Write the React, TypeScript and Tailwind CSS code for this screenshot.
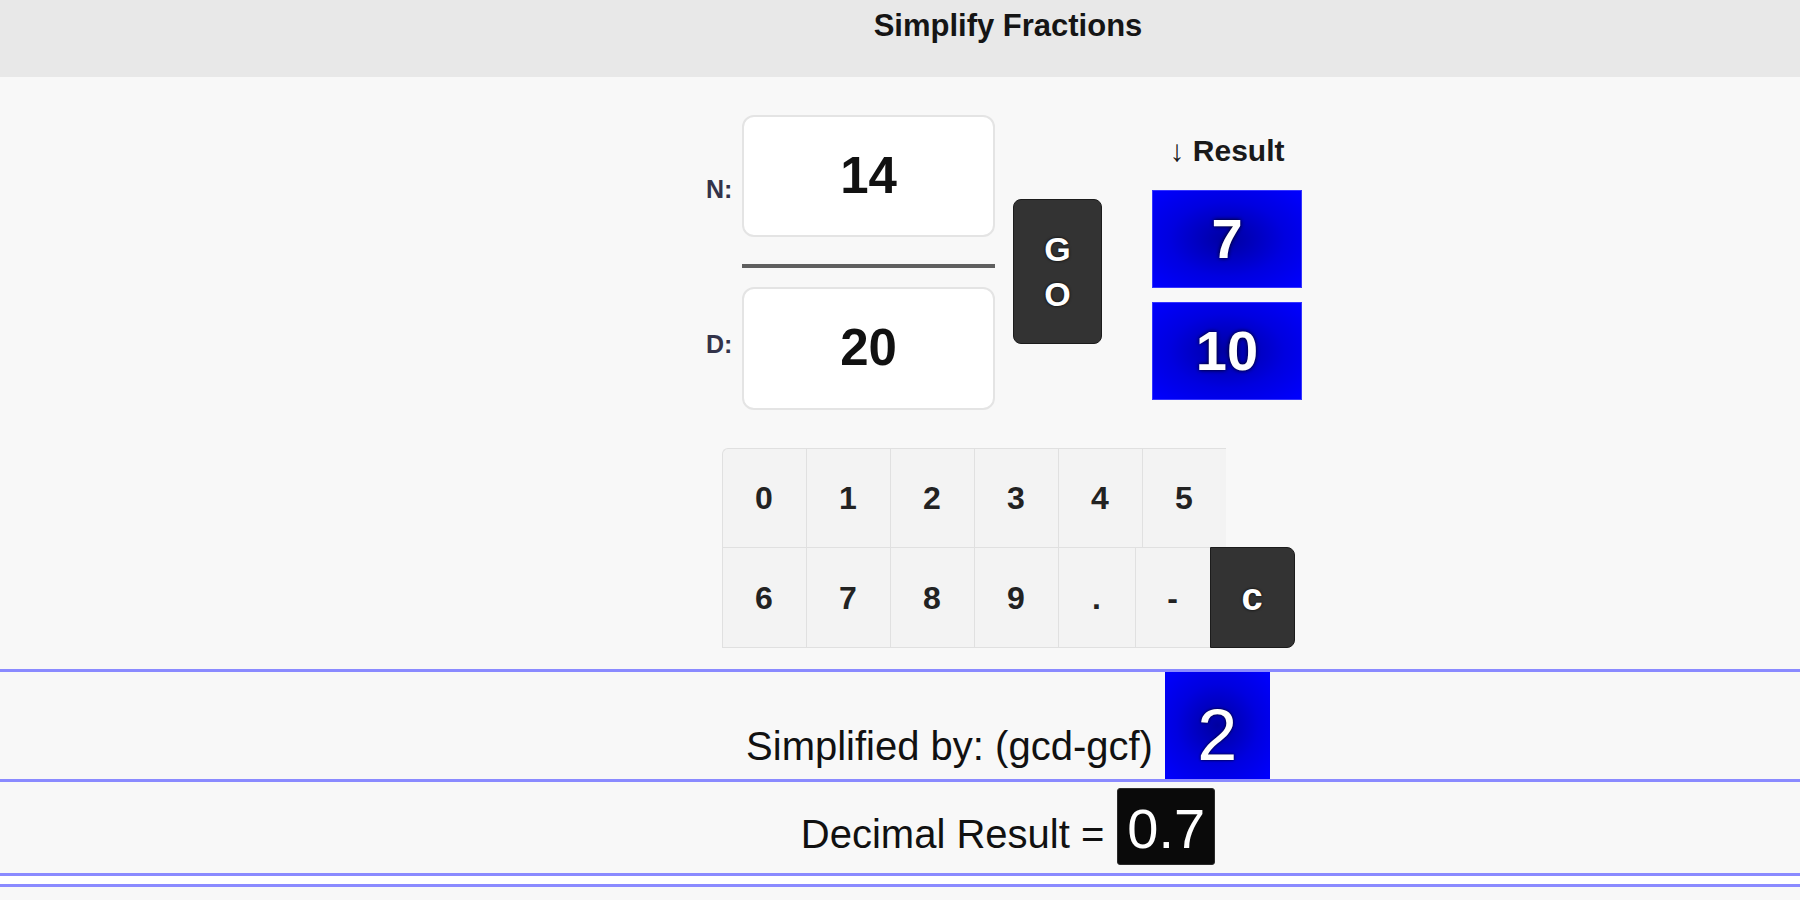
export default function App() {
  const row1 = ["0", "1", "2", "3", "4", "5"];
  const row2: [string, string][] = [
    ["6", "w-[84px]"],
    ["7", "w-[84px]"],
    ["8", "w-[84px]"],
    ["9", "w-[84px]"],
    [".", "w-[77px]"],
    ["-", "w-[75px]"],
  ];
  const blue =
    "bg-[radial-gradient(ellipse_at_center,#0000a0_0%,#0000e0_55%,#0000ff_100%)]";
  return (
    <div className="min-h-[900px] w-full bg-[#f8f8f8] font-['Liberation_Sans',Arial,sans-serif] text-[#111]">
      {/* header */}
      <div className="h-[77px] bg-[#e8e8e8] pl-[216px] pt-[8px]">
        <div className="text-center text-[31px] leading-[36px] font-bold text-[#151515]">
          Simplify Fractions
        </div>
      </div>

      {/* calculator */}
      <div className="pl-[216px] pt-[38px] pb-[21px]">
        <div className="flex justify-center pr-[8px]">
          {/* labels */}
          <div className="flex flex-col w-[27px] mr-[9px]">
            <div className="mt-[62px] text-[25px] leading-[25px] font-bold text-[#33334a]">N:</div>
            <div className="mt-[130px] text-[25px] leading-[25px] font-bold text-[#33334a]">D:</div>
          </div>
          {/* inputs */}
          <div className="flex flex-col w-[253px]">
            <div className="h-[122px] rounded-[12px] border-2 border-[#e4e4e4] bg-white flex items-center justify-center text-[51px] font-bold text-[#111]">
              14
            </div>
            <div className="mt-[27px] h-[4px] bg-[#5f5f5f]" />
            <div className="mt-[19px] h-[123px] rounded-[12px] border-2 border-[#e4e4e4] bg-white flex items-center justify-center text-[51px] font-bold text-[#111]">
              20
            </div>
          </div>
          {/* GO */}
          <div className="ml-[18px] mt-[84px] w-[89px] h-[145px] rounded-[8px] bg-[#333] border border-[#1c1c1c] flex flex-col items-center justify-center text-white text-[34px] leading-[45px] font-bold [text-shadow:0_0_3px_#000]">
            <span>G</span>
            <span>O</span>
          </div>
          {/* result */}
          <div className="ml-[50px] w-[150px] flex flex-col">
            <div className="mt-[18px] text-center text-[30px] leading-[36px] font-bold text-[#1a1a1a]">
              <span className="font-normal">↓</span> Result
            </div>
            <div className={"mt-[21px] h-[98px] border border-[#3535ff] flex items-center justify-center text-white text-[56px] font-bold [text-shadow:0_0_4px_#000] " + blue}>
              7
            </div>
            <div className={"mt-[14px] h-[98px] border border-[#3535ff] flex items-center justify-center text-white text-[56px] font-bold [text-shadow:0_0_4px_#000] " + blue}>
              10
            </div>
          </div>
        </div>

        {/* keypad */}
        <div className="mx-auto mt-[38px] w-[573px] flex flex-col">
          <div className="flex">
            {row1.map((k, i) => (
              <div
                key={k}
                className={
                  "w-[84px] h-[99px] bg-[#f3f3f3] border-t border-l border-[#e0e0e0] flex items-center justify-center text-[32px] font-bold text-[#222] " +
                  (i === 0 ? "rounded-tl-[6px]" : "")
                }
              >
                {k}
              </div>
            ))}
          </div>
          <div className="flex">
            {row2.map(([k, w]) => (
              <div
                key={k}
                className={
                  w +
                  " h-[101px] bg-[#f3f3f3] border-t border-l border-b border-[#e0e0e0] flex items-center justify-center text-[32px] font-bold text-[#222]"
                }
              >
                {k}
              </div>
            ))}
            <div className="w-[85px] h-[101px] bg-[#333] border border-[#1c1c1c] rounded-r-[8px] flex items-center justify-center text-white text-[38px] font-bold [text-shadow:0_0_3px_#000]">
              c
            </div>
          </div>
        </div>
      </div>

      {/* simplified by */}
      <div className="border-t-[3px] border-b-[3px] border-[#8a8aff] pl-[216px]">
        <div className="flex justify-center items-baseline h-[107px]">
          <span className="text-[40px] leading-[46px] mr-[12px] text-[#111]">Simplified by: (gcd-gcf)</span>
          <span className={"w-[105px] text-center text-white text-[72px] leading-[72px] pt-[27px] pb-[8px] [text-shadow:0_0_3px_#000] " + blue}>
            2
          </span>
        </div>
      </div>

      {/* decimal */}
      <div className="border-b-[3px] border-[#8a8aff] pl-[216px]">
        <div className="flex justify-center items-baseline pt-[6px] pb-[8px]">
          <span className="text-[40px] leading-[46px] mr-[13px] text-[#111]">Decimal Result =</span>
          <span className="bg-[#0a0a0a] border border-[#2a2a2a] rounded-[3px] text-white text-[56px] leading-[56px] pt-[12px] pb-[7px] px-[9px]">
            0.7
          </span>
        </div>
      </div>
      <div className="h-[8px] bg-white" />
      <div className="border-t-[3px] border-[#8a8aff] h-[13px]" />
    </div>
  );
}
